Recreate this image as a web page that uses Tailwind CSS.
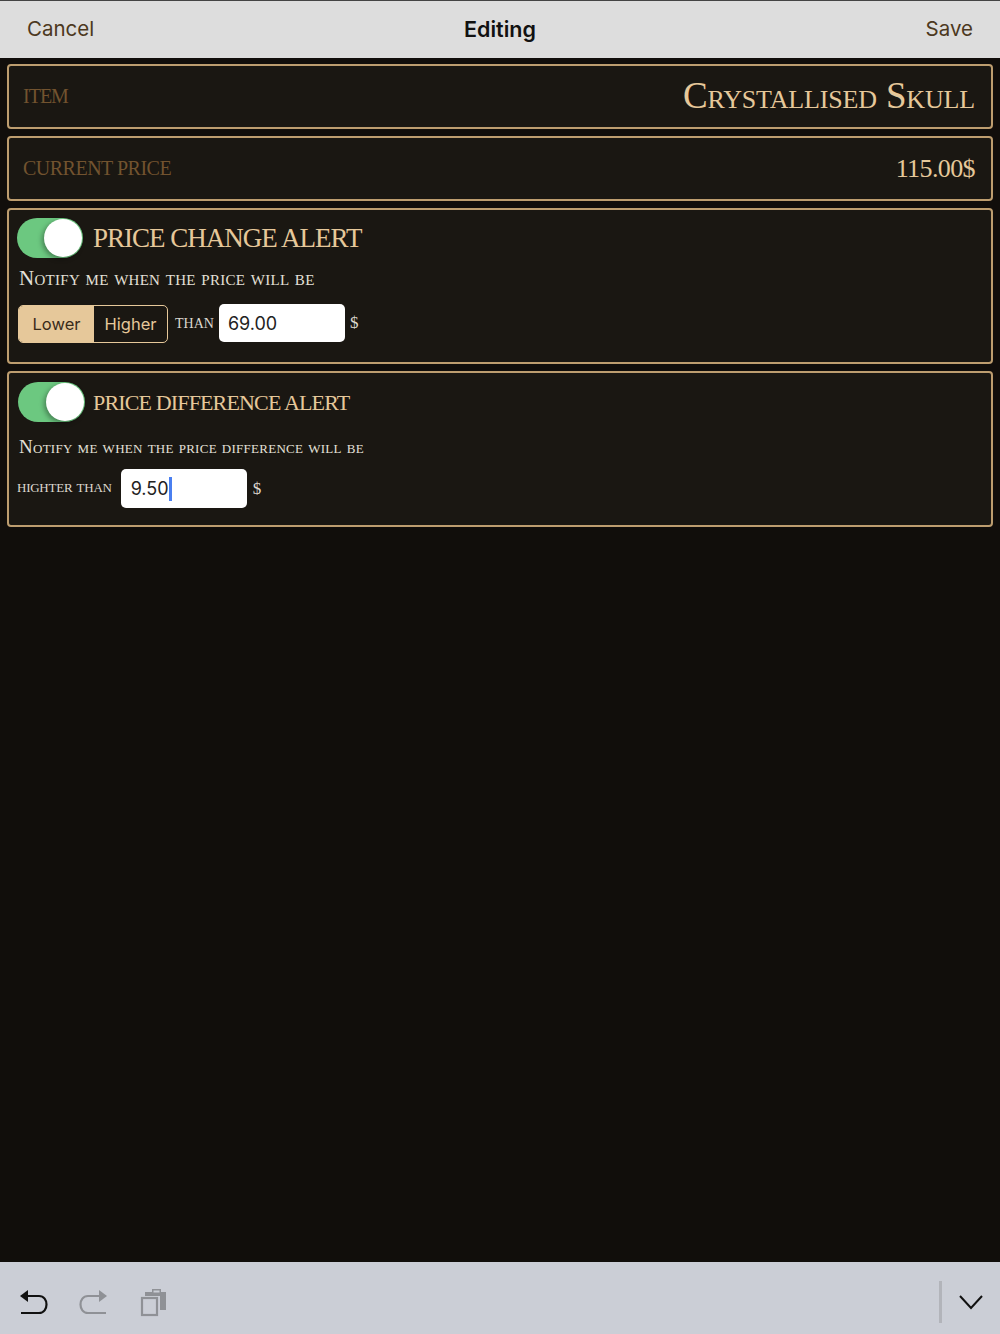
<!DOCTYPE html>
<html lang="en">
<head>
  <meta charset="UTF-8" />
  <title>Editing</title>
  <script src="https://cdn.jsdelivr.net/npm/@tailwindcss/browser@4"></script>
</head>
<body class="bg-[#110e0b] w-[1000px] h-[1334px] flex flex-col overflow-hidden font-['Liberation_Serif',serif]">
  <!-- Top bar -->
  <header class="h-[58px] shrink-0 bg-[#dddddd] border-t border-[#444] flex items-center justify-between px-[27px] font-['Inter',sans-serif] text-[20.5px] text-[#4c3820]">
    <span class="w-[120px]">Cancel</span>
    <span class="font-semibold text-[21.5px] text-[#111]">Editing</span>
    <span class="w-[120px] text-right">Save</span>
  </header>

  <main class="flex-1 flex flex-col px-[7px] pt-[6px]">
    <!-- Item -->
    <div class="h-[65px] bg-[#1a1712] border-2 border-[#bd9d6f] rounded-[4px] flex items-center justify-between pl-[14px] pr-[16px]">
      <span class="text-[20px] tracking-[-1px] mb-[2px] text-[#72532f]">ITEM</span>
      <span class="text-[37px] tracking-[-0.17px] leading-none mb-[2px] text-[#e6c89a] [font-variant-caps:small-caps]">Crystallised Skull</span>
    </div>

    <!-- Current price -->
    <div class="h-[65px] mt-[7px] bg-[#1a1712] border-2 border-[#bd9d6f] rounded-[4px] flex items-center justify-between pl-[14px] pr-[16px]">
      <span class="text-[20px] tracking-[-0.5px] mb-[2px] text-[#72532f]">CURRENT PRICE</span>
      <span class="text-[26px] tracking-[-0.6px] leading-none text-[#e6c89a]">115.00$</span>
    </div>

    <!-- Price change alert -->
    <section class="h-[156px] mt-[7px] bg-[#1a1712] border-2 border-[#bd9d6f] rounded-[4px] pl-[9px] pt-[8px]">
      <div class="flex items-center gap-[10px] -ml-[1px]">
        <div class="w-[66px] h-[40px] rounded-full bg-[#6cc880] relative">
          <div class="absolute right-[1px] top-[1px] w-[38px] h-[38px] rounded-full bg-white shadow-[-2px_2px_5px_rgba(0,0,0,0.35)]"></div>
        </div>
        <span class="text-[27px] tracking-[-1px] leading-none text-[#e6c89a]">PRICE CHANGE ALERT</span>
      </div>
      <p class="mt-[8px] ml-[1px] text-[21px] tracking-[0.28px] leading-[24px] text-[#e4e0d8] [font-variant-caps:small-caps]">Notify me when the price will be</p>
      <div class="mt-[14px] flex items-start">
        <div class="mt-[1px] w-[150px] h-[38px] flex rounded-[5px] border border-[#e6c89a] overflow-hidden font-['Inter',sans-serif] text-[16.5px]">
          <span class="w-[75px] bg-[#e6c89a] text-[#3a2c1a] flex items-center justify-center">Lower</span>
          <span class="flex-1 text-[#e6c89a] flex items-center justify-center">Higher</span>
        </div>
        <span class="ml-[7px] self-center text-[19.5px] leading-none mb-[4px] text-[#ddd8cf] [font-variant-caps:small-caps]">than</span>
        <div class="ml-[5px] w-[126px] h-[38px] bg-white rounded-[5px] flex items-center pl-[9px] font-['Inter',sans-serif] text-[18px] text-[#222]">69.00</div>
        <span class="ml-[5px] self-center text-[17px] mb-[2px] text-[#ddd8cf]">$</span>
      </div>
    </section>

    <!-- Price difference alert -->
    <section class="h-[156px] mt-[7px] bg-[#1a1712] border-2 border-[#bd9d6f] rounded-[4px] pl-[9px] pt-[9px]">
      <div class="flex items-center gap-[8px]">
        <div class="w-[67px] h-[40px] rounded-full bg-[#6cc880] relative">
          <div class="absolute right-[1px] top-[1px] w-[38px] h-[38px] rounded-full bg-white shadow-[-2px_2px_5px_rgba(0,0,0,0.35)]"></div>
        </div>
        <span class="text-[22px] tracking-[-0.85px] leading-none mt-[1px] text-[#e6c89a]">PRICE DIFFERENCE ALERT</span>
      </div>
      <p class="mt-[13px] ml-[1px] text-[19px] tracking-[0.26px] leading-[24px] text-[#e4e0d8] [font-variant-caps:small-caps]">Notify me when the price difference will be</p>
      <div class="mt-[10px] flex items-center -ml-[1px]">
        <span class="text-[18px] tracking-[-0.25px] mb-[4px] text-[#ddd8cf] [font-variant-caps:small-caps]">highter than</span>
        <div class="ml-[9px] w-[126px] h-[39px] bg-white rounded-[5px] flex items-center pl-[10px] font-['Inter',sans-serif] text-[18px] text-[#222]">9.50<span class="w-[3px] h-[24px] bg-[#4a7ff0]"></span></div>
        <span class="ml-[6px] text-[17px] text-[#ddd8cf]">$</span>
      </div>
    </section>
  </main>

  <!-- Keyboard toolbar -->
  <footer class="h-[72px] shrink-0 bg-[#cbced6] flex items-center pt-[8px] pl-[19px] pr-[16px]">
    <svg width="30" height="28" viewBox="0 0 30 28" fill="none" class="text-[#111]">
      <path d="M1 8 L9 2 V14 Z" fill="currentColor"/>
      <path d="M8 8 H20 C30 8 30 25 20 25 H2" stroke="currentColor" stroke-width="2.2"/>
    </svg>
    <svg width="30" height="28" viewBox="0 0 30 28" fill="none" class="ml-[29px] text-[#8f9196]">
      <path d="M29 8 L21 2 V14 Z" fill="currentColor"/>
      <path d="M22 8 H10 C0 8 0 25 10 25 H28" stroke="currentColor" stroke-width="2.2"/>
    </svg>
    <svg width="28" height="30" viewBox="0 0 28 30" fill="none" class="ml-[31px] text-[#8f9196]">
      <rect x="3" y="11" width="15" height="17" stroke="currentColor" stroke-width="2.2"/>
      <path d="M6 9 V5 H27 V23 H21 V9 Z" fill="currentColor"/>
      <rect x="13.75" y="2.75" width="7.5" height="3.5" stroke="currentColor" stroke-width="1.5" fill="#cbced6"/>
    </svg>
    <div class="ml-auto w-[3px] h-[42px] bg-[#b2b4ba]"></div>
    <svg width="26" height="16" viewBox="0 0 26 16" fill="none" class="ml-[16px] text-[#111]">
      <path d="M2 2 L13 14 L24 2" stroke="currentColor" stroke-width="2"/>
    </svg>
  </footer>
</body>
</html>
